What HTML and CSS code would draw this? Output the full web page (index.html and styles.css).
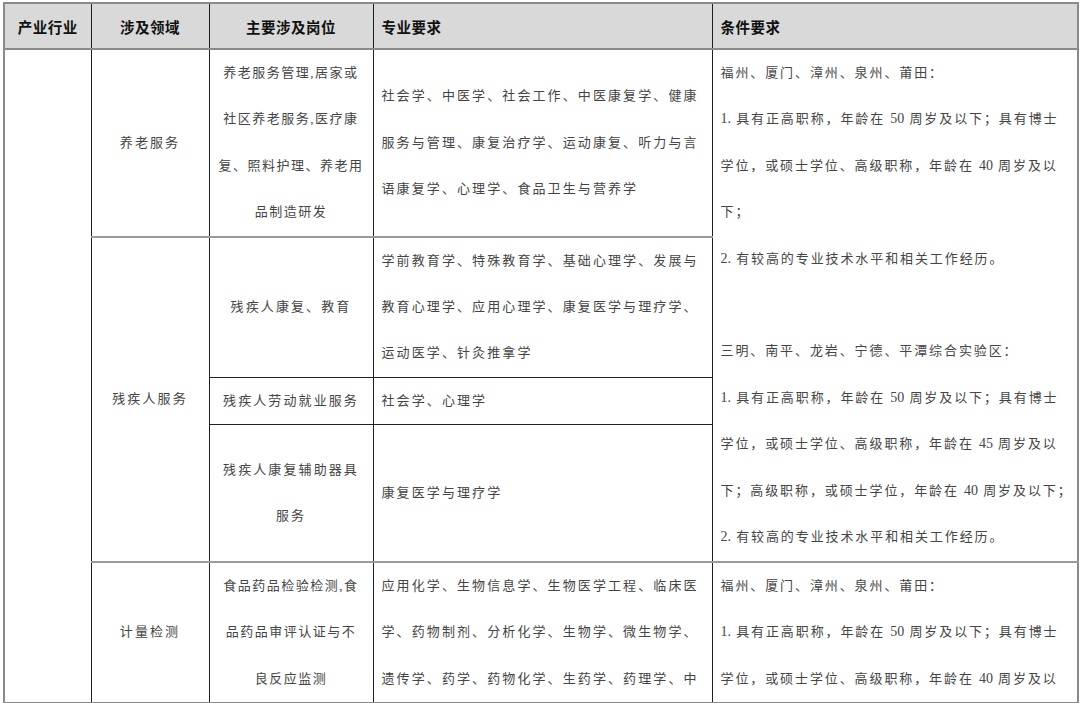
FILE: index.html
```html
<!DOCTYPE html>
<html lang="zh-CN">
<head>
<meta charset="utf-8">
<title>产业行业</title>
<link rel="stylesheet" href="styles.css">
</head>
<body>
<div class="page">
<table class="grid">
  <colgroup>
    <col class="c1"><col class="c2"><col class="c3"><col class="c4"><col class="c5">
  </colgroup>
  <thead>
    <tr class="head">
      <th class="center">产业行业</th>
      <th class="center">涉及领域</th>
      <th class="center">主要涉及岗位</th>
      <th class="left">专业要求</th>
      <th class="left">条件要求</th>
    </tr>
  </thead>
  <tbody>
    <tr class="r1 major">
      <td class="blank" rowspan="5"></td>
      <td class="center">养老服务</td>
      <td class="center post">养老服务管理,居家或<br>社区养老服务,医疗康<br>复、照料护理、养老用<br>品制造研发</td>
      <td class="left">社会学、中医学、社会工作、中医康复学、健康<br>服务与管理、康复治疗学、运动康复、听力与言<br>语康复学、心理学、食品卫生与营养学</td>
      <td class="left cond" rowspan="4">
        <div class="ln">福州、厦门、漳州、泉州、莆田：</div>
        <div class="ln"><span class="num">1.</span> 具有正高职称，年龄在 <span class="num">50</span> 周岁及以下；具有博士</div>
        <div class="ln">学位，或硕士学位、高级职称，年龄在 <span class="num">40</span> 周岁及以</div>
        <div class="ln">下；</div>
        <div class="ln"><span class="num">2.</span> 有较高的专业技术水平和相关工作经历。</div>
        <div class="ln">&nbsp;</div>
        <div class="ln">三明、南平、龙岩、宁德、平潭综合实验区：</div>
        <div class="ln"><span class="num">1.</span> 具有正高职称，年龄在 <span class="num">50</span> 周岁及以下；具有博士</div>
        <div class="ln">学位，或硕士学位、高级职称，年龄在 <span class="num">45</span> 周岁及以</div>
        <div class="ln">下；高级职称，或硕士学位，年龄在 <span class="num">40</span> 周岁及以下；</div>
        <div class="ln"><span class="num">2.</span> 有较高的专业技术水平和相关工作经历。</div>
      </td>
    </tr>
    <tr class="r2 major">
      <td class="center" rowspan="3">残疾人服务</td>
      <td class="center">残疾人康复、教育</td>
      <td class="left">学前教育学、特殊教育学、基础心理学、发展与<br>教育心理学、应用心理学、康复医学与理疗学、<br>运动医学、针灸推拿学</td>
    </tr>
    <tr class="r3 minor">
      <td class="center">残疾人劳动就业服务</td>
      <td class="left">社会学、心理学</td>
    </tr>
    <tr class="r4 minor">
      <td class="center">残疾人康复辅助器具<br>服务</td>
      <td class="left">康复医学与理疗学</td>
    </tr>
    <tr class="r5 major">
      <td class="center">计量检测</td>
      <td class="center post">食品药品检验检测,食<br>品药品审评认证与不<br>良反应监测</td>
      <td class="left">应用化学、生物信息学、生物医学工程、临床医<br>学、药物制剂、分析化学、生物学、微生物学、<br>遗传学、药学、药物化学、生药学、药理学、中</td>
      <td class="left cond">
        <div class="ln">福州、厦门、漳州、泉州、莆田：</div>
        <div class="ln"><span class="num">1.</span> 具有正高职称，年龄在 <span class="num">50</span> 周岁及以下；具有博士</div>
        <div class="ln">学位，或硕士学位、高级职称，年龄在 <span class="num">40</span> 周岁及以</div>
      </td>
    </tr>
  </tbody>
</table>
</div>
</body>
</html>
```

FILE: styles.css
```css
html, body {
  margin: 0;
  padding: 0;
  background: #ffffff;
}

.page {
  padding: 2px 3px 0 3px;
  width: 1074px;
}

.grid {
  width: 1074px;
  table-layout: fixed;
  border-collapse: collapse;
  border: 2px solid #8a8a8a;
  font-family: "Liberation Serif", "Noto Sans CJK SC", serif;
  font-size: 13px;
  color: #454545;
}

.c1 { width: 87px; }
.c2 { width: 118px; }
.c3 { width: 164px; }
.c4 { width: 339px; }
.c5 { width: 366px; }

.grid th,
.grid td {
  border-left: 1px solid #1e1e1e;
  border-right: 1px solid #1e1e1e;
  padding: 0 8px;
  vertical-align: middle;
  white-space: nowrap;
  overflow: hidden;
}

.grid th {
  height: 44px;
  background: #d9d9d9;
  font-family: "Noto Sans CJK SC", sans-serif;
  font-weight: 700;
  font-size: 14.5px;
  color: #111111;
  letter-spacing: 0.5px;
  border-top: 1px solid #6e6e6e;
  border-bottom: 2px solid #8a8a8a;
}

.grid td {
  line-height: 46.4px;
  letter-spacing: 2.1px;
}

.center { text-align: center; }
.left { text-align: left; }

.grid td.post {
  padding: 0 4px;
  letter-spacing: 1.5px;
}

.grid td.cond {
  vertical-align: top;
  letter-spacing: 1.9px;
}

.ln {
  height: 46.4px;
  line-height: 46.4px;
}

.num {
  letter-spacing: 0;
  font-size: 14px;
}

.major > td {
  border-top: 2px solid #9a9a9a;
}

.minor > td {
  border-top: 1px solid #222222;
}

.r1 { height: 185px; }
.r2 { height: 139px; }
.r3 { height: 47px; }
.r4 { height: 137px; }
.r5 { height: 140px; }

.r5 > td {
  border-bottom: 2px solid #8a8a8a;
}
```
